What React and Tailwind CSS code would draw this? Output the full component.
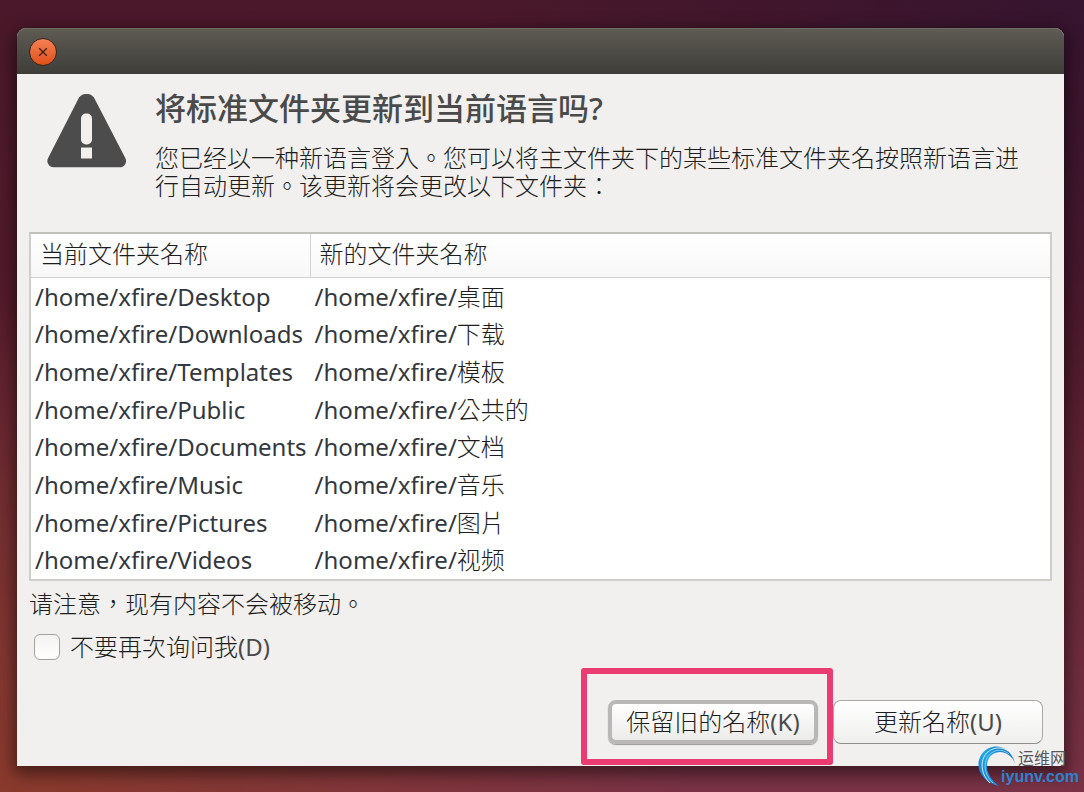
import { useState } from "react";

const folders = [
  { current: "Desktop", next: "桌面" },
  { current: "Downloads", next: "下载" },
  { current: "Templates", next: "模板" },
  { current: "Public", next: "公共的" },
  { current: "Documents", next: "文档" },
  { current: "Music", next: "音乐" },
  { current: "Pictures", next: "图片" },
  { current: "Videos", next: "视频" },
];

function TitleBar() {
  return (
    <header className="flex h-[46px] items-center rounded-t-[9px] bg-linear-to-b from-[#5f5c54] to-[#3e3d38] pl-3 pt-px shadow-[inset_0_1px_0_#6d6a62]">
      <button
        type="button"
        aria-label="关闭"
        className="flex size-7 items-center justify-center rounded-full border border-[#33251d] bg-linear-to-b from-[#f48052] to-[#e04f16]"
      >
        <svg viewBox="0 0 10 10" className="size-[10px]" fill="none" stroke="#3f1e10" strokeWidth="1.3">
          <path d="M1.2 1.2 8.8 8.8M8.8 1.2 1.2 8.8" />
        </svg>
      </button>
    </header>
  );
}

function WarningIcon() {
  return (
    <svg viewBox="0 0 80 74" className="h-[74px] w-20 shrink-0" aria-hidden="true">
      <path
        d="M31 5.6A9.2 9.2 0 0 1 48 5.6L78 63.6A6.3 6.3 0 0 1 72.4 73.3H6.8A6.3 6.3 0 0 1 1.4 63.6Z"
        fill="#4c4c4c"
      />
      <rect x="34" y="19.5" width="11" height="31" rx="5" fill="#f1f0ee" />
      <rect x="34" y="53.5" width="11" height="11" fill="#f1f0ee" />
    </svg>
  );
}

function FolderTable() {
  return (
    <table className="h-[349px] w-full border-separate border-spacing-0 border-2 border-t-[#c3c1be] border-r-[#cfcdca] border-b-[#cfcdca] border-l-[#cfcdca] bg-white text-left">
      <thead>
        <tr className="h-11 bg-linear-to-b from-white to-[#f7f7f7]">
          <th className="w-[278px] border-r border-b border-[#d3d2d0] px-[9px] pt-0 pb-1 font-light">
            当前文件夹名称
          </th>
          <th className="border-b border-[#d3d2d0] px-[9px] pt-0 pb-1 font-light">新的文件夹名称</th>
        </tr>
      </thead>
      <tbody className="text-[#33373e]">
        {folders.map((f) => (
          <tr key={f.current}>
            <td className="px-1 py-0">/home/xfire/{f.current}</td>
            <td className="px-1 py-0">
              /home/xfire/<span className="font-light text-[#1d1d1d]">{f.next}</span>
            </td>
          </tr>
        ))}
      </tbody>
    </table>
  );
}

function Watermark() {
  return (
    <div className="absolute right-[5px] bottom-[5px] flex items-end font-['Liberation_Sans','Noto_Sans_CJK_SC',sans-serif]">
      <svg viewBox="0 0 38 42" className="-mr-[15px] h-[42px] w-[38px]" aria-hidden="true">
        <defs>
          <linearGradient id="swirl" x1="1" y1="0" x2="0" y2="1">
            <stop offset="0" stopColor="#1565b0" />
            <stop offset="0.5" stopColor="#1fa8ea" />
            <stop offset="1" stopColor="#1673c4" />
          </linearGradient>
        </defs>
        <path
          d="M37 18C31 5 17 4 11 13C6 22 10 33 21 41C7 38 -2 27 1 15C6 -3 31 -4 37 18Z"
          fill="url(#swirl)"
        />
        <path d="M12 38C1 28 1 9 15 4C20 2 26 3 30 6" fill="none" stroke="#d5eefa" strokeWidth="1" />
        <path d="M15 38C4 28 5 12 15 7C20 4 26 5 31 9" fill="none" stroke="#9ad6f5" strokeWidth="0.8" />
      </svg>
      <div className="flex flex-col">
        <span className="pl-[17px] text-base leading-4 text-[#55565a]">运维网</span>
        <span className="text-base leading-5 font-bold text-[#2e82cf]">iyunv.com</span>
      </div>
    </div>
  );
}

export default function App() {
  const [dontAsk, setDontAsk] = useState(false);

  return (
    <div className="relative flex min-h-screen flex-col bg-[radial-gradient(ellipse_at_0%_100%,#8a3a2c_0%,transparent_45%),radial-gradient(ellipse_at_100%_0%,#36142f_0%,transparent_40%),linear-gradient(to_bottom,#4a182a_0%,#541b2b_40%,#6b2b3c_80%,#793246_100%)] pt-7 pr-5 pb-[26px] pl-[17px] font-['Noto_Sans','Noto_Sans_CJK_TC',sans-serif] text-2xl leading-7 text-[#1d1d1d]">
      <div className="flex flex-1 flex-col rounded-t-[9px] bg-[#f1f0ee] shadow-[0_5px_16px_3px_rgba(0,0,0,0.5)]">
        <TitleBar />

        <main className="flex flex-1 flex-col px-3 pt-[14px]">
          <section className="flex gap-7 pl-[18px]">
            <div className="pt-[6px]">
              <WarningIcon />
            </div>
            <div className="min-w-0 flex-1">
              <h1 className="text-[31px] leading-10 font-medium text-[#4a4a4a]">
                将标准文件夹更新到当前语言吗?
              </h1>
              <p className="pt-4 font-light">
                您已经以一种新语言登入。您可以将主文件夹下的某些标准文件夹名按照新语言进
                <br />
                行自动更新。该更新将会更改以下文件夹：
              </p>
            </div>
          </section>

          <div className="pt-8">
            <FolderTable />
          </div>

          <p className="pt-[9px] font-light">请注意，现有内容不会被移动。</p>

          <label className="flex items-center gap-[10px] pt-[15px] pl-[5px] font-light">
            <input
              type="checkbox"
              checked={dontAsk}
              onChange={(e) => setDontAsk(e.target.checked)}
              className="size-[26px] appearance-none rounded-md border border-[#a3a19e] bg-linear-to-b from-[#f3f3f3] to-white checked:bg-[#f07746]"
            />
            <span>
              不要再次询问我<span className="font-normal text-[#4a4a4a]">(D)</span>
            </span>
          </label>

          <footer className="mt-auto flex justify-end gap-[15px] pr-[9px] pb-[22px] font-light">
            <div className="relative">
              <button
                type="button"
                className="h-11 w-[210px] rounded-lg border-4 border-[#b9b8b6] bg-linear-to-b from-white to-[#ebebea] shadow-[0_1px_1px_#999]"
              >
                保留旧的名称<span className="font-normal text-[#4a4a4a]">(K)</span>
              </button>
              <div className="pointer-events-none absolute -top-8 -right-[15px] -bottom-[21px] -left-[27px] z-10 rounded-[3px] border-6 border-[#ea3b72]" />
            </div>
            <button
              type="button"
              className="h-11 w-[210px] rounded-lg border border-[#aaa8a5] border-b-[#8f8d8a] bg-linear-to-b from-white to-[#efefee]"
            >
              更新名称<span className="font-normal text-[#4a4a4a]">(U)</span>
            </button>
          </footer>
        </main>
      </div>

      <Watermark />
    </div>
  );
}
